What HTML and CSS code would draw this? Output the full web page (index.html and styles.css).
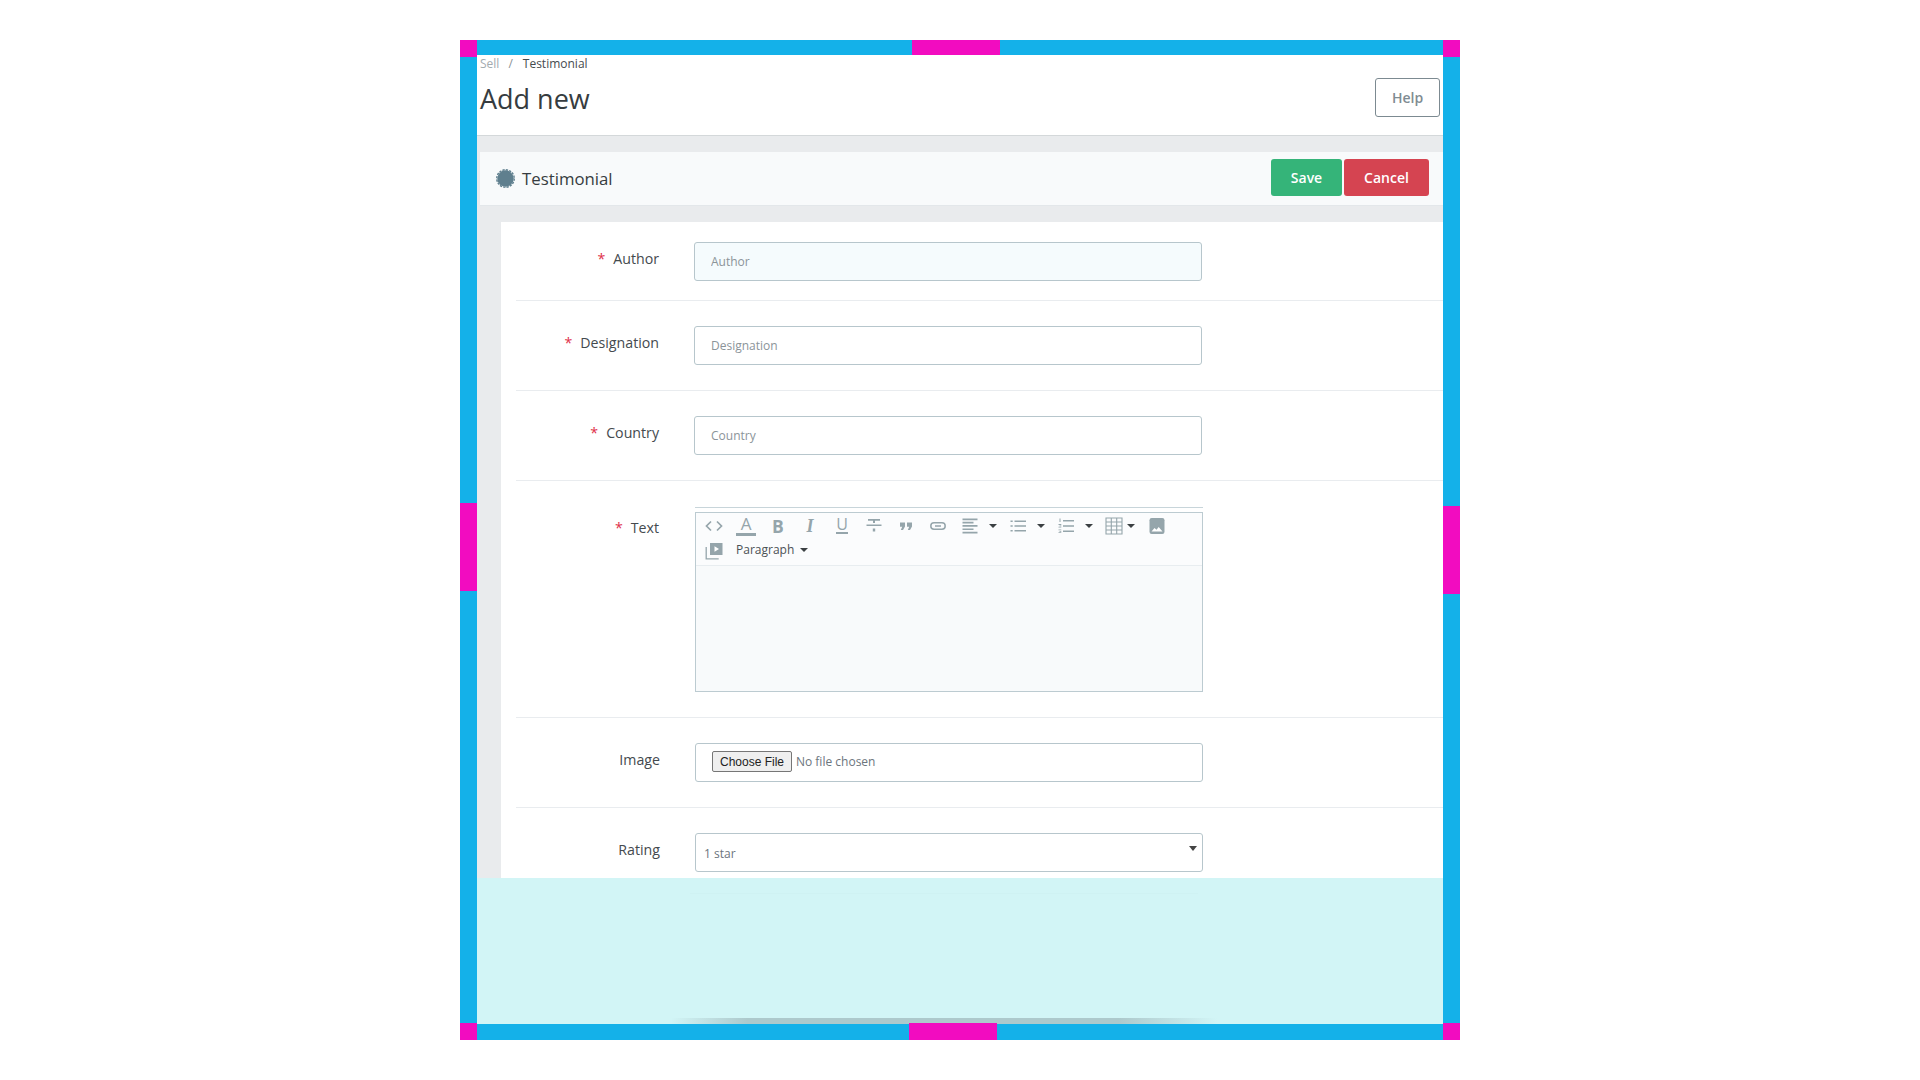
FILE: index.html
```html
<!DOCTYPE html>
<html lang="en">
<head>
<meta charset="utf-8">
<title>Add new Testimonial</title>
<link rel="stylesheet" href="styles.css">
</head>
<body>
<div class="frame">
  <span class="mark mark-tl"></span><span class="mark mark-tr"></span><span class="mark mark-bl"></span><span class="mark mark-br"></span>
  <span class="mark mark-top"></span><span class="mark mark-bottom"></span><span class="mark mark-left"></span><span class="mark mark-right"></span>

  <header class="page-head">
    <div class="page-head-text">
      <nav class="crumbs"><span class="crumb-muted">Sell</span><span class="crumb-sep">/</span><span class="crumb-current">Testimonial</span></nav>
      <h1 class="page-title">Add new</h1>
    </div>
    <button class="btn-help" type="button">Help</button>
  </header>

  <main class="workspace">
    <div class="card-head">
      <div class="card-title">
        <svg class="badge-icon" viewBox="0 0 20 20" aria-hidden="true"><circle cx="10" cy="10" r="8.600" fill="#5f7f8e"/><circle cx="10" cy="10" r="9.200" fill="none" stroke="#5f7f8e" stroke-width="1.500" stroke-dasharray="2.400 1.215"/></svg>
        <h2 class="card-heading">Testimonial</h2>
      </div>
      <div class="card-actions">
        <button class="btn btn-save" type="button">Save</button>
        <button class="btn btn-cancel" type="button">Cancel</button>
      </div>
    </div>

    <form class="panel">
      <div class="row row-first">
        <label class="label"><span class="req">*</span>Author</label>
        <input class="field field-active" type="text" placeholder="Author">
      </div>
      <div class="row">
        <label class="label"><span class="req">*</span>Designation</label>
        <input class="field" type="text" placeholder="Designation">
      </div>
      <div class="row">
        <label class="label"><span class="req">*</span>Country</label>
        <input class="field" type="text" placeholder="Country">
      </div>
      <div class="row row-editor">
        <label class="label label-editor"><span class="req">*</span>Text</label>
        <div class="editor">
          <div class="editor-box">
            <div class="toolbar">
              <span class="tool"><svg class="ico" viewBox="0 0 18 18"><path d="M6 4.500 1.500 9 6 13.500M12 4.500 16.500 9 12 13.500" fill="none" stroke="currentColor" stroke-width="1.700"/></svg></span>
              <span class="tool"><span class="glyph glyph-a">A</span></span>
              <span class="tool"><span class="glyph glyph-b">B</span></span>
              <span class="tool"><span class="glyph glyph-i">I</span></span>
              <span class="tool"><span class="glyph glyph-u">U</span></span>
              <span class="tool"><svg class="ico" viewBox="0 0 18 18"><path d="M3 2h12v1.800h-5V6H8V3.800H3zM1.500 7.500h15v1.600h-15zM7.800 11.500h2.400v3H7.800z" fill="currentColor"/></svg></span>
              <span class="tool"><svg class="ico" viewBox="0 0 18 18"><path d="M3 5.500h5v4L6 13H3.800l1.400-3.300H3zM10 5.500h5v4L13 13h-2.200l1.400-3.300H10z" fill="currentColor"/></svg></span>
              <span class="tool"><svg class="ico" viewBox="0 0 18 18"><rect x="1.800" y="5.800" width="14.400" height="6.400" rx="3.200" fill="none" stroke="currentColor" stroke-width="1.500"/><path d="M6 9h6" stroke="currentColor" stroke-width="1.500"/></svg></span>
              <span class="tool tool-drop"><svg class="ico" viewBox="0 0 18 18"><path d="M1.500 1.500h15v1.700h-15zM1.500 4.800h11v1.700h-11zM1.500 8.100h15v1.700h-15zM1.500 11.400h11v1.700h-11zM1.500 14.800h15v1.700h-15z" fill="currentColor"/></svg><i class="caret"></i></span>
              <span class="tool tool-drop"><svg class="ico" viewBox="0 0 18 18"><path d="M5.500 3.500H17v1.600H5.500zM5.500 8.200H17v1.600H5.500zM5.500 13H17v1.600H5.500zM1.500 3.500h2.200v1.600H1.500zM1.500 8.200h2.200v1.600H1.500zM1.500 13h2.200v1.600H1.500z" fill="currentColor"/></svg><i class="caret"></i></span>
              <span class="tool tool-drop"><svg class="ico" viewBox="0 0 18 18"><path d="M6 3h11v1.600H6zM6 8.200h11v1.600H6zM6 13.500h11v1.600H6zM2.500 1.500h1v3.500h-1zM1.500 7h2.800v.9H1.500zM2.500 8.400h1.800v.8H2.500zM1.500 9.700h2.800v.8H1.500zM1.500 12.500h2.800v.8H1.500zM2.500 13.900h1.800v.8H2.500zM1.500 15.300h2.800v.8H1.500z" fill="currentColor"/></svg><i class="caret"></i></span>
              <span class="tool tool-table"><svg class="ico" viewBox="0 0 18 18"><path d="M1 1h16v16H1zM6.300 1v16M11.700 1v16M1 5h16M1 9h16M1 13h16" fill="none" stroke="currentColor" stroke-width="1.100"/></svg><i class="caret"></i></span>
              <span class="tool"><svg class="ico" viewBox="0 0 18 18"><rect x="1.500" y="1" width="15" height="16" rx="2.200" fill="currentColor"/><path d="M3.500 14.500l3-3.500 2 1.800 2.200-2.800 3.800 4.500z" fill="#fff"/></svg></span>
              <span class="tool"><svg class="ico" viewBox="0 0 18 18"><path d="M5 1h12.500v12H5z" fill="currentColor"/><path d="M9.500 4.200v5.600l4.500-2.800z" fill="#fff"/><path d="M1.200 5v11.800h12.500" fill="none" stroke="currentColor" stroke-width="1.300"/></svg></span>
              <span class="tool-style">Paragraph<i class="caret caret-tight"></i></span>
            </div>
            <div class="editor-body"></div>
          </div>
        </div>
      </div>
      <div class="row row-low">
        <label class="label">Image</label>
        <div class="field file-wrap"><input class="file" type="file"></div>
      </div>
      <div class="row row-low row-last">
        <label class="label">Rating</label>
        <div class="select-wrap">
          <select class="select"><option>1 star</option></select>
        </div>
      </div>
    </form>
  </main>

  <div class="veil"><div class="veil-box"></div><div class="veil-shadow"></div></div>
</div>
</body>
</html>
```
FILE: styles.css
```css
* { box-sizing: border-box; }
html, body { margin: 0; height: 100%; background: #fff; overflow: hidden; }
body { font-family: "Open Sans", "Liberation Sans", sans-serif; color: #363a3d; }

.frame {
  position: relative;
  display: flex;
  flex-direction: column;
  width: 1000px;
  height: 1000px;
  margin: 40px auto 0;
  border-style: solid;
  border-color: #14b1e9;
  border-width: 15px 17px 16px 17px;
  background: #fff;
}

.mark { position: absolute; background: #f20cc0; z-index: 3; }
.mark-tl { left: -17px; top: -15px; width: 17px; height: 17px; }
.mark-tr { right: -17px; top: -15px; width: 17px; height: 17px; }
.mark-bl { left: -17px; bottom: -16px; width: 17px; height: 17px; }
.mark-br { right: -17px; bottom: -16px; width: 17px; height: 17px; }
.mark-top { left: 435px; top: -15px; width: 88px; height: 15px; }
.mark-bottom { left: 432px; bottom: -16px; width: 88px; height: 17px; }
.mark-left { left: -17px; top: 448px; width: 17px; height: 88px; }
.mark-right { right: -17px; top: 451px; width: 17px; height: 88px; }

.page-head {
  display: flex;
  justify-content: space-between;
  align-items: flex-start;
  flex: none;
  height: 81px;
  padding: 0 3px;
  border-bottom: 1px solid #d4d8da;
}
.crumbs { display: flex; margin-top: 1px; font-size: 12px; line-height: 16px; height: 16px; }
.crumb-muted { color: #a3abaf; }
.crumb-sep { color: #8a9296; margin: 0 10px 0 9px; }
.crumb-current { color: #454b4e; }
.page-title { margin: 8px 0 0; font-size: 27px; line-height: 38px; font-weight: 400; color: #363c40; }
.btn-help {
  width: 65px;
  height: 39px;
  margin-top: 23px;
  background: #fff;
  border: 1px solid #7c8a91;
  border-radius: 3px;
  font: 600 14px "Open Sans", sans-serif;
  color: #7f8c92;
}

.workspace {
  flex: 1;
  min-height: 0;
  display: flex;
  flex-direction: column;
  padding: 16px 0 0 3px;
  background: #e9ebed;
  overflow: hidden;
}
.card-head {
  flex: none;
  display: flex;
  justify-content: space-between;
  align-items: center;
  height: 54px;
  padding: 0 14px 0 16px;
  background: #f8fafb;
  border-bottom: 1px solid #e3e7ea;
}
.card-title { display: flex; align-items: center; gap: 7px; }
.badge-icon { width: 19px; height: 19px; }
.card-heading { margin: 0; font-size: 16.800px; line-height: 24px; font-weight: 400; color: #363c40; }
.card-actions { display: flex; gap: 2px; align-self: flex-start; margin-top: 7px; }
.btn {
  height: 37px;
  border: 0;
  border-radius: 3px;
  color: #fff;
  font: 600 14px "Open Sans", sans-serif;
}
.btn-save { width: 71px; background: #35b479; }
.btn-cancel { width: 85px; background: #d54451; }

.panel {
  flex: 1;
  min-height: 0;
  margin: 16px 0 0 21px;
  padding-left: 15px;
  background: #fff;
  overflow: hidden;
}
.row {
  display: grid;
  grid-template-columns: 143px 508px;
  column-gap: 35px;
  align-items: start;
  padding: 25px 0;
  border-bottom: 1px solid #e9ecef;
}
.row-first { padding: 20px 0 19px; }
.row-editor { padding: 26px 0 25px; column-gap: 35px; }
.row-low { grid-template-columns: 144px 508px; }
.row-last { border-bottom: 0; }

.label {
  display: block;
  padding-top: 7px;
  font-size: 14.200px;
  line-height: 20px;
  text-align: right;
  color: #444a4e;
}
.label-editor { padding-top: 11px; }
.req { color: #e0304a; margin-right: 8px; }

.field {
  display: block;
  width: 508px;
  height: 39px;
  padding: 0 16px;
  background: #fff;
  border: 1px solid #b7c6cc;
  border-radius: 3px;
  font: 12px "Open Sans", sans-serif;
  color: #6c757d;
  outline: 0;
}
.field-active { background: #f5fbfd; }
.field::placeholder { color: #8b9499; opacity: 1; }

.editor { width: 508px; margin-left: 1px; border-top: 1px solid #c8d5da; }
.editor-box { margin-top: 4px; height: 180px; display: flex; flex-direction: column; border: 1px solid #bccbd1; }
.toolbar {
  flex: none;
  height: 53px;
  display: flex;
  flex-wrap: wrap;
  align-content: flex-start;
  padding: 0 0 0 2px;
  background: #fbfcfd;
  border-bottom: 1px solid #e8edf0;
  color: #95a5ab;
}
.tool { display: flex; align-items: center; justify-content: center; width: 32px; height: 25px; }
.tool-drop { width: 48px; justify-content: flex-start; gap: 10px; padding-left: 7px; }
.tool-table { width: 43px; justify-content: flex-start; gap: 4px; padding-left: 7px; }
.ico { width: 18px; height: 18px; display: block; flex: none; }
.glyph { display: block; color: #95a5ab; text-align: center; }
.glyph-a { width: 20px; font-size: 17px; line-height: 15px; border-bottom: 3px solid #95a5ab; padding-bottom: 2px; }
.glyph-b { font-size: 17.500px; line-height: 18px; font-weight: 700; }
.glyph-i { font-size: 18px; line-height: 18px; font-weight: 700; font-style: italic; font-family: "Liberation Serif", serif; }
.glyph-u { width: 12px; font-size: 16px; line-height: 14px; border-bottom: 2px solid #95a5ab; padding-bottom: 1px; }
.caret {
  display: block;
  flex: none;
  width: 0;
  height: 0;
  border-left: 4px solid transparent;
  border-right: 4px solid transparent;
  border-top: 4px solid #3b4043;
}
.caret-tight { margin-left: 6px; }
.tool-style {
  display: flex;
  align-items: center;
  height: 25px;
  margin-left: 6px;
  padding-bottom: 2px;
  font-size: 12px;
  color: #4b5155;
}
.editor-body { flex: 1; background: #f8fafb; }

.file-wrap { display: flex; align-items: center; padding: 0 16px; }
.file { font: 12px "Open Sans", sans-serif; color: #6c757d; width: 100%; margin-top: -2px; }
.file::file-selector-button {
  width: 80px;
  height: 21px;
  margin-right: 4px;
  padding: 0;
  font: 12px "Liberation Sans", Arial, sans-serif;
  color: #222;
  background: #efefef;
  border: 1px solid #767676;
  border-radius: 2px;
}

.select-wrap { position: relative; width: 508px; height: 39px; }
.select-wrap::after {
  content: "";
  position: absolute;
  right: 6px;
  top: 13px;
  border-left: 4.500px solid transparent;
  border-right: 4.500px solid transparent;
  border-top: 5px solid #444;
}
.select {
  appearance: none;
  display: block;
  width: 100%;
  height: 100%;
  padding: 2px 8px 0;
  background: #fff;
  border: 1px solid #b7c6cc;
  border-radius: 3px;
  font: 12px "Open Sans", sans-serif;
  color: #6c757d;
}

.veil {
  flex: none;
  height: 146px;
  background: #d2f5f6;
  display: flex;
  flex-direction: column;
  justify-content: space-between;
}
.veil-box {
  margin: 15px 0 0 213px;
  width: 508px;
  height: 1px;
  background: #cff2f3;
}
.veil-shadow {
  margin-left: 194px;
  width: 546px;
  height: 6px;
  background: linear-gradient(90deg, rgba(168,198,201,0), #adc9cc 14%, #adc9cc 82%, rgba(168,198,201,0));
}
```
